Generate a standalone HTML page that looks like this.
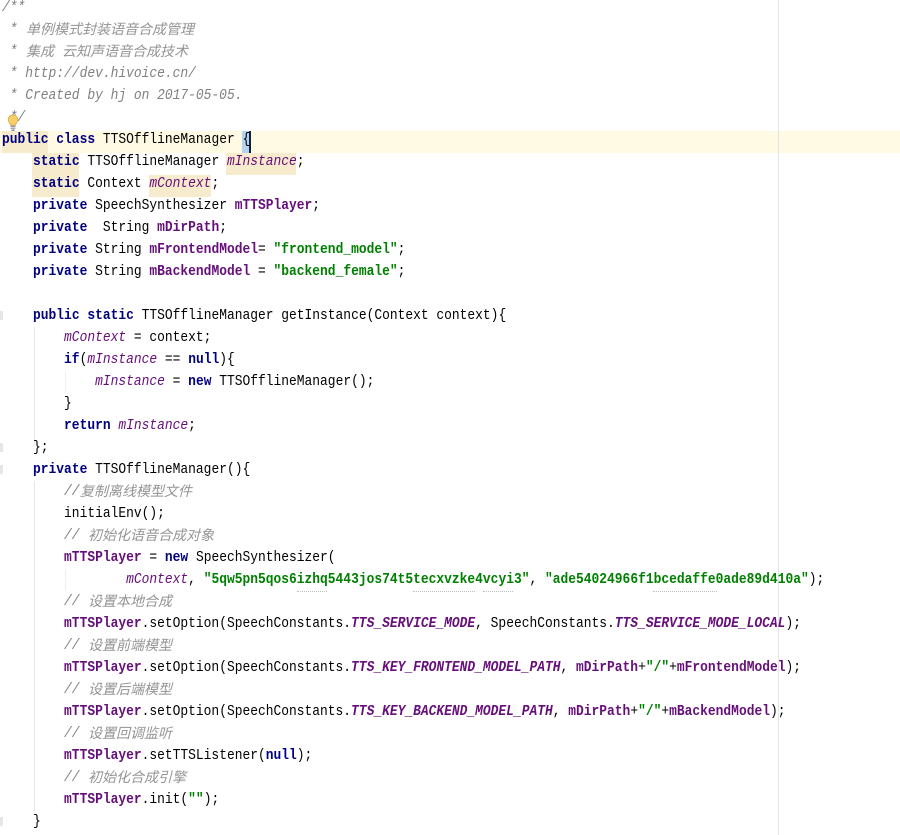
<!DOCTYPE html>
<html><head><meta charset="utf-8"><style>
html,body{margin:0;padding:0;background:#fff}
#p{position:relative;width:900px;height:835px;overflow:hidden;background:#fff}
.r{position:absolute}
pre{position:absolute;left:2px;top:-3px;margin:0;font:15px/22px "Liberation Mono",monospace;color:#000;transform:scaleX(.8617);transform-origin:0 0;white-space:pre}
.k{color:#000080;font-weight:bold}
.f{color:#660e7a;font-weight:bold}
.i{color:#660e7a;font-style:italic}
.s{color:#660e7a;font-weight:bold;font-style:italic}
.t{color:#008000;font-weight:bold}
.c{color:#808080;font-style:italic}
.z{position:absolute;font:italic 14px/22px "Noto Sans CJK SC","Liberation Sans",sans-serif;color:#949494;white-space:pre}
.w{position:absolute;top:591px;height:0;border-top:1px dotted #b8c4b8}
</style></head><body><div id="p">
<div class="r" style="left:0;top:131px;width:900px;height:22px;background:#fffae3"></div>
<div class="r" style="left:2px;top:131px;width:46px;height:22px;background:#f6ebcd"></div>
<div class="r" style="left:32px;top:153px;width:47px;height:44px;background:#f6ebcd"></div>
<div class="r" style="left:226px;top:153px;width:70px;height:22px;background:#f6ebcd"></div>
<div class="r" style="left:149px;top:175px;width:62px;height:22px;background:#f6ebcd"></div>
<div class="r" style="left:242px;top:131px;width:8px;height:22px;background:#b3d3ef"></div>
<div class="r" style="left:249px;top:131px;width:2px;height:22px;background:#12203a"></div>
<div class="r" style="left:778px;top:0;width:1px;height:835px;background:#e4e4e4"></div>
<div class="r" style="left:34px;top:327px;width:1px;height:118px;background:#e8e8e8"></div>
<div class="r" style="left:34px;top:481px;width:1px;height:330px;background:#e8e8e8"></div>
<div class="r" style="left:65px;top:371px;width:1px;height:22px;background:#eee"></div>
<div class="r" style="left:65px;top:569px;width:1px;height:22px;background:#eee"></div>
<div class="r" style="left:0;top:311px;width:3px;height:9px;background:#e6e6e6"></div>
<div class="r" style="left:0;top:443px;width:3px;height:9px;background:#e6e6e6"></div>
<div class="r" style="left:0;top:465px;width:3px;height:9px;background:#e6e6e6"></div>
<div class="r" style="left:0;top:817px;width:3px;height:9px;background:#e6e6e6"></div>
<div class="w" style="left:297px;width:30px"></div>
<div class="w" style="left:413px;width:62px"></div>
<div class="w" style="left:483px;width:30px"></div>
<div class="w" style="left:653px;width:64px"></div>
<pre><span class="c">/**
 * 
 * 
 * http://dev.hivoice.cn/
 * Created by hj on 2017-05-05.
 */</span>
<span class="k">public class</span> TTSOfflineManager {
    <span class="k">static</span> TTSOfflineManager <span class="i">mInstance</span>;
    <span class="k">static</span> Context <span class="i">mContext</span>;
    <span class="k">private</span> SpeechSynthesizer <span class="f">mTTSPlayer</span>;
    <span class="k">private</span>  String <span class="f">mDirPath</span>;
    <span class="k">private</span> String <span class="f">mFrontendModel</span>= <span class="t">"frontend_model"</span>;
    <span class="k">private</span> String <span class="f">mBackendModel</span> = <span class="t">"backend_female"</span>;

    <span class="k">public static</span> TTSOfflineManager getInstance(Context context){
        <span class="i">mContext</span> = context;
        <span class="k">if</span>(<span class="i">mInstance</span> == <span class="k">null</span>){
            <span class="i">mInstance</span> = <span class="k">new</span> TTSOfflineManager();
        }
        <span class="k">return</span> <span class="i">mInstance</span>;
    };
    <span class="k">private</span> TTSOfflineManager(){
        <span class="c">//</span>
        initialEnv();
        <span class="c">//</span>
        <span class="f">mTTSPlayer</span> = <span class="k">new</span> SpeechSynthesizer(
                <span class="i">mContext</span>, <span class="t">"5qw5pn5qos6izhq5443jos74t5tecxvzke4vcyi3"</span>, <span class="t">"ade54024966f1bcedaffe0ade89d410a"</span>);
        <span class="c">//</span>
        <span class="f">mTTSPlayer</span>.setOption(SpeechConstants.<span class="s">TTS_SERVICE_MODE</span>, SpeechConstants.<span class="s">TTS_SERVICE_MODE_LOCAL</span>);
        <span class="c">//</span>
        <span class="f">mTTSPlayer</span>.setOption(SpeechConstants.<span class="s">TTS_KEY_FRONTEND_MODEL_PATH</span>, <span class="f">mDirPath</span>+<span class="t">"/"</span>+<span class="f">mFrontendModel</span>);
        <span class="c">//</span>
        <span class="f">mTTSPlayer</span>.setOption(SpeechConstants.<span class="s">TTS_KEY_BACKEND_MODEL_PATH</span>, <span class="f">mDirPath</span>+<span class="t">"/"</span>+<span class="f">mBackendModel</span>);
        <span class="c">//</span>
        <span class="f">mTTSPlayer</span>.setTTSListener(<span class="k">null</span>);
        <span class="c">//</span>
        <span class="f">mTTSPlayer</span>.init(<span class="t">""</span>);
    }</pre>
<div class="z" style="left:26px;top:18px">单例模式封装语音合成管理</div>
<div class="z" style="left:26px;top:40px">集成</div>
<div class="z" style="left:62px;top:40px">云知声语音合成技术</div>
<div class="z" style="left:80px;top:480px">复制离线模型文件</div>
<div class="z" style="left:88px;top:524px">初始化语音合成对象</div>
<div class="z" style="left:88px;top:590px">设置本地合成</div>
<div class="z" style="left:88px;top:634px">设置前端模型</div>
<div class="z" style="left:88px;top:678px">设置后端模型</div>
<div class="z" style="left:88px;top:722px">设置回调监听</div>
<div class="z" style="left:88px;top:766px">初始化合成引擎</div>
<svg class="r" style="left:7px;top:114px" width="12" height="19" viewBox="0 0 12 19"><path d="M6 1C3 1 1.200 3 1.200 5.600c0 2.200 1.800 3.400 2.300 5.400h5c.5-2 2.300-3.200 2.300-5.400C10.800 3 9 1 6 1z" fill="#f7cf6a" stroke="#e0ac3c" stroke-width=".8"/><rect x="3.500" y="11.500" width="5" height="1.500" fill="#999"/><rect x="3.500" y="13.500" width="5" height="1.500" fill="#aaa"/><rect x="4.500" y="15.500" width="3" height="1.500" fill="#888"/></svg>
</div></body></html>
